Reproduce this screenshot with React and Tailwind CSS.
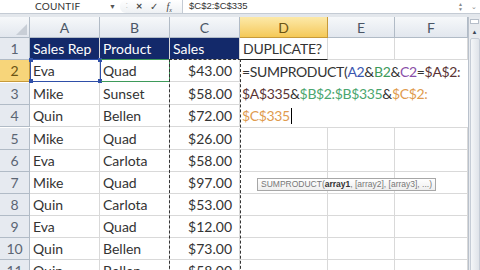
import React from "react";

const rows = [
    ["Eva", "Quad", "$43.00"],
    ["Mike", "Sunset", "$58.00"],
    ["Quin", "Bellen", "$72.00"],
    ["Mike", "Quad", "$26.00"],
    ["Eva", "Carlota", "$58.00"],
    ["Mike", "Quad", "$97.00"],
    ["Quin", "Carlota", "$53.00"],
    ["Eva", "Quad", "$12.00"],
    ["Quin", "Bellen", "$73.00"],
    ["Quin", "Bellen", "$58.00"],
];

const cell = "h-[22px] border-r border-b border-[#d9d9d9] px-[3px] flex items-center whitespace-nowrap overflow-hidden";
const rowHead = "h-[22px] border-r border-b border-[#b1bbc6] bg-[#e6eaf0] text-[#5b6573] flex items-center justify-center";
const colHead = "h-[21px] border-r border-b border-[#b1bbc6] bg-gradient-to-b from-[#f6f8fa] to-[#e2e7ee] text-[#4a5566] flex items-center justify-center";

const Formula = () => (
    <div className="col-span-3 row-span-3 bg-white border-b border-[#d9d9d9] pl-[2px] pt-[1px] leading-[22px] tracking-[-0.35px] text-[#333]">
        <div>
            =SUMPRODUCT(<span className="text-[#3a56b0]">A2</span>&<span className="text-[#3d9a5a]">B2</span>&<span className="text-[#8a4fa8]">C2</span>=<span className="text-[#5a3434]">$A$2:</span>
        </div>
        <div>
            <span className="text-[#5a3434]">$A$335</span>&<span className="text-[#4aa66e]">$B$2:$B$335</span>&<span className="text-[#e09b4e]">$C$2:</span>
        </div>
        <div className="flex items-center">
            <span className="text-[#e09b4e]">$C$335</span>
            <span className="w-px h-[16px] bg-black ml-[1px]"></span>
        </div>
    </div>
);

export default function App() {
    return (
        <div className="w-[480px] h-[270px] overflow-hidden bg-white relative font-['Lato','Liberation_Sans',sans-serif] text-[#222]">
            {/* formula bar */}
            <div className="h-[14px] flex items-center bg-white border-b border-[#c4cbd4] text-[10px] text-[#333]">
                <div className="w-[120px] flex items-center justify-between pl-[35px] pr-[4px]">
                    <span className="tracking-[0.2px]">COUNTIF</span>
                    <span className="text-[7px] text-[#555]">▼</span>
                </div>
                <div className="w-[62px] h-full flex items-center gap-[8px] pl-[6px] bg-gradient-to-b from-white to-[#eef1f4] rounded-l-[6px] text-[#444]">
                    <span className="text-[7px] text-[#aaa] -mt-[2px]">⁚</span>
                    <span className="text-[11px] font-bold">×</span>
                    <span className="text-[10px]">✓</span>
                    <span className="italic text-[10px] font-['Liberation_Serif',serif]">f<sub className="text-[6px]">x</sub></span>
                </div>
                <div className="flex-1 border-l border-[#c4cbd4] h-full flex items-center pl-[6px] font-['Liberation_Sans',sans-serif] text-[9.5px]">
                    $C$2:$C$335
                </div>
                <div className="w-[22px] flex items-center justify-between pr-[3px] text-[#888]">
                    <span className="flex flex-col leading-[5px] text-[5px]">
                        <span>▲</span>
                        <span>▼</span>
                    </span>
                    <span className="text-[7px]">⌄</span>
                </div>
            </div>
            <div className="h-[3px] bg-[#e3e7ec]"></div>

            <div className="flex">
                <div className="grid grid-cols-[30px_70px_70px_70px_88px_67px_73px] text-[14px]">
                    {/* column headers */}
                    <div className={colHead + " relative"}>
                        <span className="absolute right-[2px] bottom-[2px] w-0 h-0 border-l-[11px] border-l-transparent border-b-[11px] border-b-[#c8ced6]"></span>
                    </div>
                    {["A", "B", "C"].map((c) => (
                        <div key={c} className={colHead}>{c}</div>
                    ))}
                    <div className="h-[21px] border-r border-b border-[#c79a3a] bg-gradient-to-b from-[#fce9a8] to-[#f5c956] text-[#6b5414] flex items-center justify-center">D</div>
                    <div className={colHead}>E</div>
                    <div className={colHead}>F</div>

                    {/* row 1 */}
                    <div className={rowHead}>1</div>
                    <div className={cell + " bg-[#13296a] text-white border-[#13296a]"}>Sales Rep</div>
                    <div className={cell + " bg-[#13296a] text-white border-[#13296a]"}>Product</div>
                    <div className={cell + " bg-[#13296a] text-white border-[#13296a]"}>Sales</div>
                    <div className={cell + " border-b-[#222] text-[#333] tracking-[-0.2px]"}>DUPLICATE?</div>
                    <div className={cell}></div>
                    <div className={cell}></div>

                    {rows.map((r, i) => (
                        <React.Fragment key={i}>
                            <div className={i === 0 ? "h-[22px] border-r border-b border-[#c79a3a] bg-[#f7d57a] text-[#6b5414] flex items-center justify-center" : rowHead}>
                                {i + 2}
                            </div>
                            <div className={cell + " text-[#333]"}>{r[0]}</div>
                            <div className={cell + " text-[#333]"}>{r[1]}</div>
                            <div className={cell + " justify-end pr-[7px] text-[#333]"}>{r[2]}</div>
                            {i === 0 && <Formula />}
                            {i > 2 && (
                                <>
                                    <div className={cell}></div>
                                    <div className={cell}></div>
                                    <div className={cell}></div>
                                </>
                            )}
                        </React.Fragment>
                    ))}
                </div>

                {/* vertical scrollbar */}
                <div className="w-[12px] h-[260px] bg-[#e7eaee] border-l border-[#b9c1cc] flex flex-col items-center">
                    <div className="w-[9px] h-[5px] mt-[2px] border border-[#b6bec9] bg-white"></div>
                    <div className="w-[10px] h-[11px] mt-[2px] flex items-center justify-center text-[6px] text-[#3b4656]">▲</div>
                    <div className="w-[10px] flex-1 mt-[1px] bg-gradient-to-r from-[#f4f6f8] to-[#dfe3e9] border border-[#c5ccd6] rounded-[2px]"></div>
                </div>
            </div>

            {/* range highlights */}
            <div className="absolute left-[30px] top-[59px] w-[71px] h-[23px] border border-[#2f4fa8]">
                <span className="absolute -left-[2px] -top-[2px] w-[4px] h-[4px] bg-[#2f4fa8]"></span>
                <span className="absolute -right-[2px] -top-[2px] w-[4px] h-[4px] bg-[#2f4fa8]"></span>
                <span className="absolute -left-[2px] -bottom-[2px] w-[4px] h-[4px] bg-[#2f4fa8]"></span>
                <span className="absolute -right-[2px] -bottom-[2px] w-[4px] h-[4px] bg-[#2f4fa8]"></span>
            </div>
            <div className="absolute left-[101px] top-[59px] w-[69px] h-[23px] border border-[#3e9a5a] border-l-0"></div>
            <div className="absolute left-[169px] top-[59px] w-[72px] h-[230px] border border-dashed border-[#333]"></div>

            {/* function tooltip */}
            <div className="absolute left-[257px] top-[178px] h-[13px] px-[3px] flex items-center bg-gradient-to-b from-white to-[#eeeeee] border border-[#a7a7a7] text-[8.5px] text-[#777] font-['Liberation_Sans',sans-serif] whitespace-nowrap">
                SUMPRODUCT(<span className="font-bold text-[#333]">array1</span>, [array2], [array3], ...)
            </div>
        </div>
    );
}
